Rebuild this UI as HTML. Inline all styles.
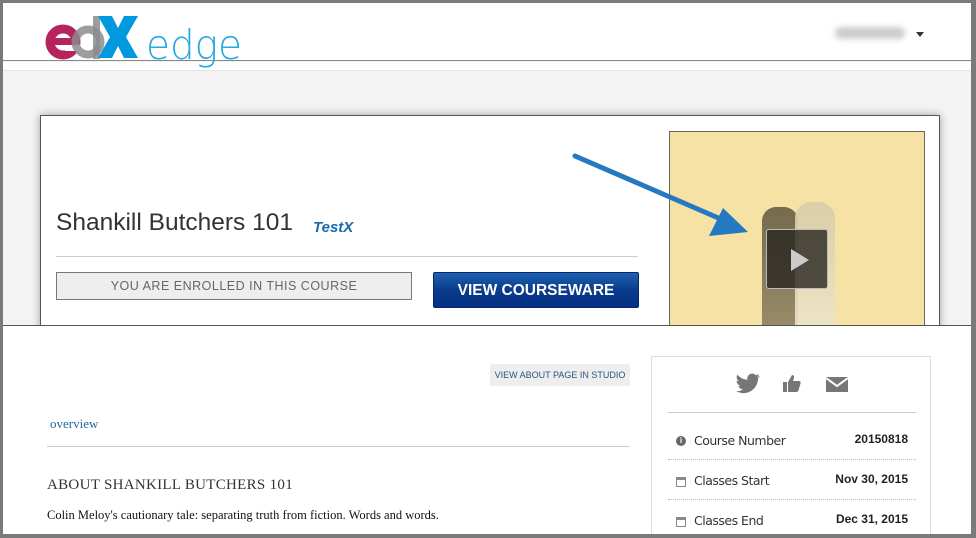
<!DOCTYPE html>
<html><head><style>
*{margin:0;padding:0;box-sizing:border-box}
body{width:976px;height:538px;overflow:hidden;background:#7a7a7a;position:relative;font-family:"Liberation Sans",sans-serif}
#frame{position:absolute;left:3px;top:3px;width:968px;height:531px;background:#f3f3f3;overflow:hidden}
#hdr{position:absolute;left:0;top:0;width:968px;height:58px;background:#fff;border-bottom:1px solid #888}
#hdr2{position:absolute;left:0;top:59px;width:968px;height:9px;background:#fff;border-bottom:1px solid #e4e4e4}
.card{position:absolute;left:37px;top:112px;width:900px;height:230px;background:#fff;border:1px solid #555;box-shadow:0 0 8px rgba(0,0,0,.35)}
#lower{position:absolute;left:0;top:322px;width:968px;height:220px;background:#fff;border-top:1px solid #555}
.lbl{position:absolute;left:42px;font-size:12.5px;color:#333;font-family:'DejaVu Sans',sans-serif;letter-spacing:-.5px}
.val{position:absolute;right:22px;font-size:12px;font-weight:bold;color:#222}
</style></head><body>
<div id="frame">
<div id="hdr">
<div style="position:absolute;left:832px;top:24px;width:70px;height:12px;background:#ccc;filter:blur(3px);border-radius:6px"></div>
<div style="position:absolute;left:913px;top:29px;border-left:4px solid transparent;border-right:4px solid transparent;border-top:5px solid #333"></div>
</div>
<div id="hdr2"></div>
<svg width="260" height="75" style="position:absolute;left:0;top:0">
<circle cx="60" cy="39" r="13" fill="none" stroke="#b5245f" stroke-width="9"/>
<rect x="47" y="35" width="27" height="7" fill="#b5245f"/>
<rect x="62" y="42" width="16" height="6" fill="#fff"/>
<circle cx="85" cy="39" r="12.5" fill="none" stroke="#8a8c8e" stroke-width="8" opacity=".85"/>
<rect x="90" y="13" width="7" height="43" fill="#8a8c8e" opacity=".85"/>
<path d="M95 13h14l6 12 6-12h14l-12 21 12 21h-14l-6-12-6 12h-14l12-21z" fill="#0099e0"/>
<text x="143" y="56" font-family="DejaVu Sans" font-weight="200" font-size="41" fill="#25a9e0" textLength="96" lengthAdjust="spacingAndGlyphs">edge</text>
</svg>
<div class="card">
<div style="position:absolute;left:15px;top:93px;font-size:24.5px;color:#333;font-family:'Liberation Sans',sans-serif">Shankill Butchers 101</div>
<div style="position:absolute;left:272px;top:103px;font-size:15px;color:#1a6aa8;font-weight:bold;font-style:italic">TestX</div>
<div style="position:absolute;left:15px;top:140px;width:582px;height:1px;background:#ccc"></div>
<div style="position:absolute;left:15px;top:156px;width:356px;height:28px;background:#eee;border:1px solid #777;text-align:center;line-height:26px;font-size:12.5px;color:#666;letter-spacing:.5px">YOU ARE ENROLLED IN THIS COURSE</div>
<div style="position:absolute;left:392px;top:156px;width:206px;height:36px;background:linear-gradient(#1e62b0,#0a3b8c 50%,#062f82);border:1px solid #042870;border-radius:2px;text-align:center;line-height:36px;font-size:15.5px;color:#fff;font-weight:bold">VIEW COURSEWARE</div>
<div style="position:absolute;left:628px;top:15px;width:256px;height:200px;background:#f5e2a4;border:1px solid #666;overflow:hidden">
<div style="position:absolute;left:92px;top:75px;width:36px;height:125px;background:linear-gradient(#4a4232,#7a7055);border-radius:14px 14px 4px 4px;opacity:.75"></div>
<div style="position:absolute;left:125px;top:70px;width:40px;height:130px;background:linear-gradient(#d8cca8,#ede4cc);border-radius:16px 16px 4px 4px;opacity:.9"></div>
<div style="position:absolute;left:96px;top:97px;width:62px;height:60px;background:rgba(40,38,32,.8);border:1px solid #bbb;border-radius:3px"></div>
<div style="position:absolute;left:121px;top:117px;border-top:11px solid transparent;border-bottom:11px solid transparent;border-left:18px solid #ccc"></div>
</div>
</div>
<svg width="300" height="120" style="position:absolute;left:560px;top:145px">
<line x1="12" y1="8" x2="160" y2="72" stroke="#2479c2" stroke-width="5" stroke-linecap="round"/>
<polygon points="185,84 146,88 160,60" fill="#2479c2"/>
</svg>
<div id="lower">
<div style="position:absolute;left:487px;top:38px;width:140px;height:22px;background:#eee;border-radius:2px;font-size:9px;color:#2a5580;text-align:center;line-height:22px">VIEW ABOUT PAGE IN STUDIO</div>
<div style="position:absolute;left:47px;top:90px;font-family:'Liberation Serif',serif;font-size:13px;color:#1d6aa0">overview</div>
<div style="position:absolute;left:44px;top:120px;width:583px;height:1px;background:#ccc"></div>
<div style="position:absolute;left:44px;top:151px;font-family:'Liberation Serif',serif;font-size:15px;color:#333;letter-spacing:.3px">ABOUT SHANKILL BUTCHERS 101</div>
<div style="position:absolute;left:44px;top:182px;font-family:'Liberation Serif',serif;font-size:12.5px;color:#111">Colin Meloy's cautionary tale: separating truth from fiction. Words and words.</div>
<div style="position:absolute;left:648px;top:30px;width:280px;height:200px;border:1px solid #ddd;border-bottom:none">
<svg width="240" height="30" style="position:absolute;left:20px;top:12px">
<path d="M88 7c-1 .5-2 .7-3 .8 1-.6 2-1.6 2-2.7-1 .6-2 1-3 1.2a5 5 0 0 0-8.6 4.5c-4-.2-7.6-2.2-10-5-1.4 2.3-.7 5.2 1.5 6.6-.8 0-1.6-.3-2.3-.6 0 2.4 1.7 4.5 4 5-.7.2-1.5.2-2.2.1.6 2 2.5 3.4 4.6 3.5A10 10 0 0 1 64 22a14.5 14.5 0 0 0 22-13c1-.7 1.7-1.4 2-2z" fill="#777"/>
<path d="M111 13h4v10h-4zM116 13l4-7c1.5 0 2.5 1 2 3l-1 3h6c1.5 0 2 1.5 1.5 2.5l-2 7c-.5 1-1 1.5-2 1.5h-8.5z" fill="#777"/>
<path d="M154 8h22v15h-22z" fill="#777"/><path d="M154 9l11 8 11-8" fill="none" stroke="#fff" stroke-width="2"/>
</svg>
<div style="position:absolute;left:16px;top:55px;width:248px;height:1px;background:#ccc"></div>
<div style="position:absolute;left:24px;top:79px;width:10px;height:10px;border-radius:50%;background:#666;color:#fff;font-size:8px;font-weight:bold;text-align:center;line-height:10px">i</div>
<div class="lbl" style="top:76px">Course Number</div>
<div class="val" style="top:75px">20150818</div>
<div style="position:absolute;left:16px;top:102px;width:248px;border-top:1px dotted #bbb"></div>
<div style="position:absolute;left:24px;top:120px;width:10px;height:10px;border:1px solid #888;border-top:3px solid #888"></div>
<div class="lbl" style="top:116px">Classes Start</div>
<div class="val" style="top:115px">Nov 30, 2015</div>
<div style="position:absolute;left:16px;top:142px;width:248px;border-top:1px dotted #bbb"></div>
<div style="position:absolute;left:24px;top:160px;width:10px;height:10px;border:1px solid #888;border-top:3px solid #888"></div>
<div class="lbl" style="top:156px">Classes End</div>
<div class="val" style="top:155px">Dec 31, 2015</div>
</div>
</div>
</div>
</body></html>
